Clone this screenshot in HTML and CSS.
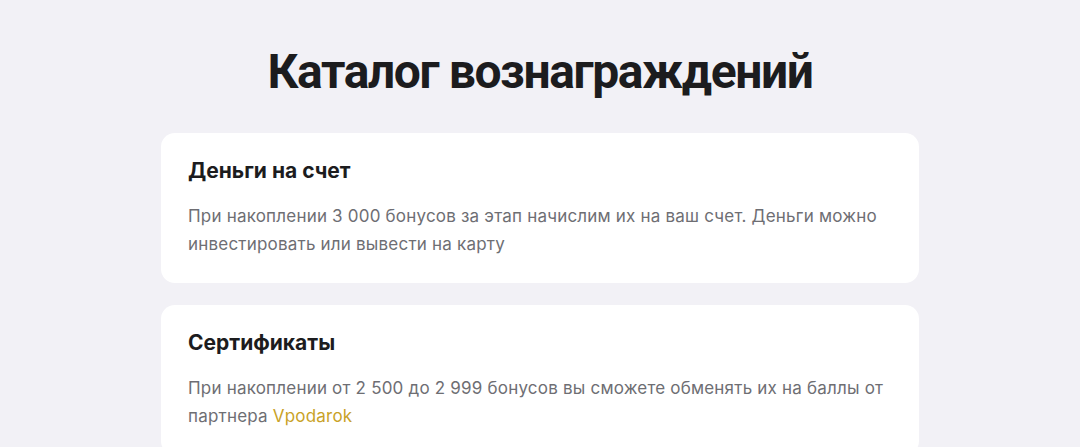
FILE: index.html
```html
<!DOCTYPE html>
<html lang="ru">
<head>
<meta charset="UTF-8">
<meta name="viewport" content="width=device-width, initial-scale=1.0">
<link rel="stylesheet" href="styles.css">
<title>Каталог вознаграждений</title>
</head>
<body>
<div class="catalog">
  <h1>Каталог вознаграждений</h1>

  <div class="card">
    <h3>Деньги на счет</h3>
    <p>При накоплении 3 000 бонусов за этап начислим их на ваш счет. Деньги можно инвестировать или вывести на карту</p>
  </div>

  <div class="card">
    <h3>Сертификаты</h3>
    <p>При накоплении от 2 500 до 2 999 бонусов вы сможете обменять их на баллы от партнера <a href="#">Vpodarok</a></p>
  </div>
</div>
</body>
</html>
```

FILE: styles.css
```css
body {
  font-family: Inter, "Noto Sans", sans-serif;
  background-color: #f2f1f6;
  margin: 0;
}

.catalog {
  width: 758px;
  margin: 0 auto;
  padding-top: 44px;
}

.catalog h1 {
  font-family: Roboto, "Liberation Sans", sans-serif;
  font-weight: 700;
  font-size: 48px;
  line-height: 56px;
  letter-spacing: -1.4px;
  color: #1c1c1e;
  text-align: center;
  margin: 0 0 33px;
}

.card {
  background: #fff;
  border-radius: 14px;
  padding: 24px 27px 25px;
  margin-bottom: 22px;
}

.card h3 {
  font-size: 21px;
  font-weight: 700;
  line-height: 28px;
  color: #1c1c1e;
  margin: 0 0 17px;
}

.card p {
  font-size: 17px;
  line-height: 28px;
  letter-spacing: 0.2px;
  color: #6e6e73;
  margin: 0;
}

.card a {
  color: #c9a227;
  text-decoration: none;
}
```
